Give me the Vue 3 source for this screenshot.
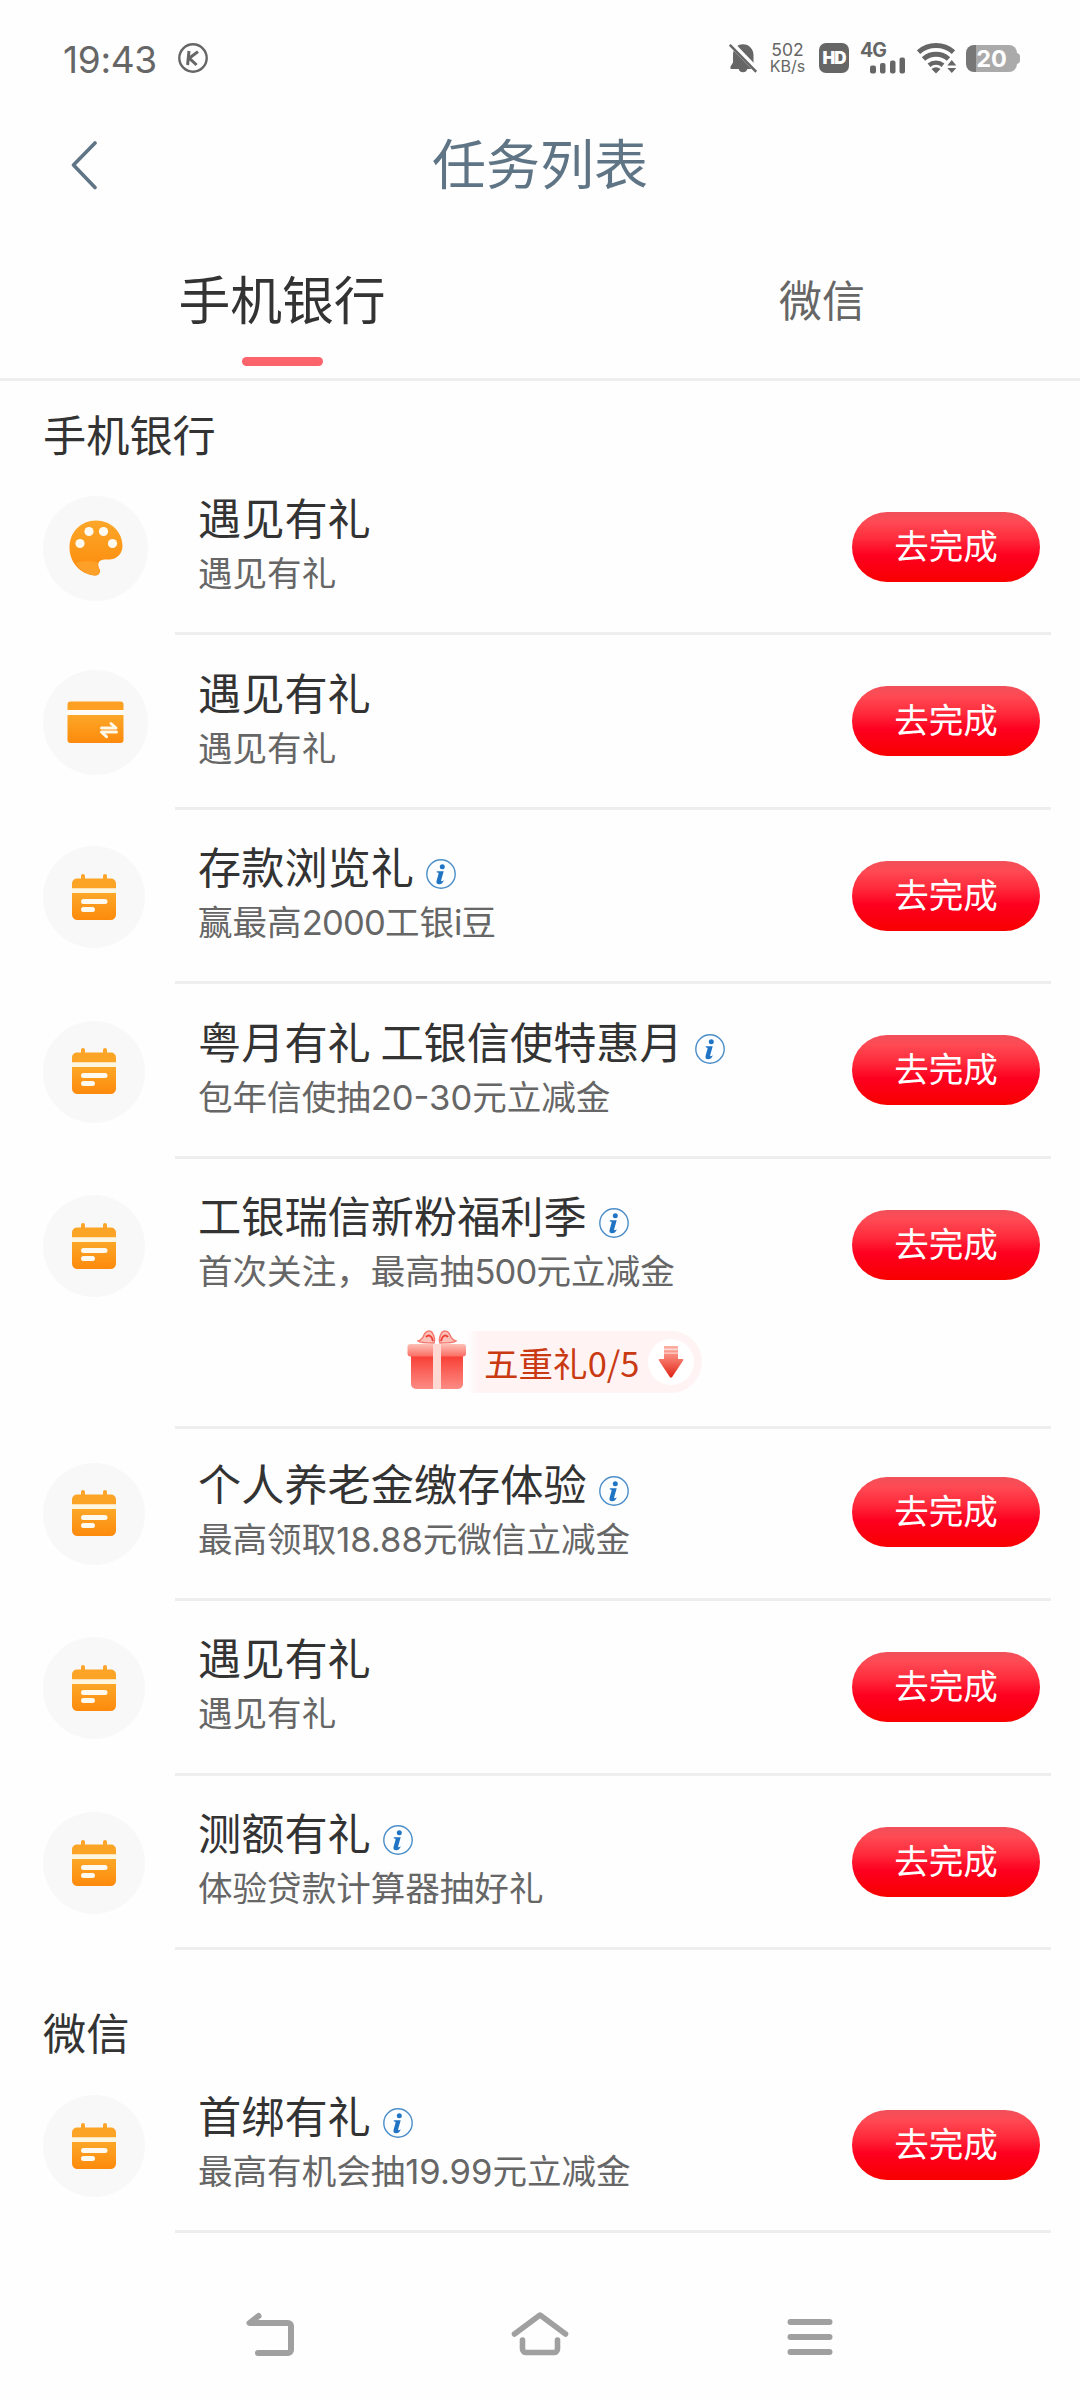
<script setup>
const sections = [
  {
    name: '手机银行',
    tasks: [
      { icon: 'palette', title: '遇见有礼', desc: ['遇见有礼'] },
      { icon: 'card', title: '遇见有礼', desc: ['遇见有礼'] },
      { icon: 'calendar', title: '存款浏览礼', info: true, desc: ['赢最高', '2000', '工银', 'i', '豆'] },
      { icon: 'calendar', title: '粤月有礼 工银信使特惠月', info: true, desc: ['包年信使抽', '20-30', '元立减金'] },
      { icon: 'calendar', title: '工银瑞信新粉福利季', info: true, gift: '五重礼0/5', desc: ['首次关注，最高抽', '500', '元立减金'] },
      { icon: 'calendar', title: '个人养老金缴存体验', info: true, desc: ['最高领取', '18.88', '元微信立减金'] },
      { icon: 'calendar', title: '遇见有礼', desc: ['遇见有礼'] },
      { icon: 'calendar', title: '测额有礼', info: true, desc: ['体验贷款计算器抽好礼'] },
    ],
  },
  {
    name: '微信',
    tasks: [
      { icon: 'calendar', title: '首绑有礼', info: true, desc: ['最高有机会抽', '19.99', '元立减金'] },
    ],
  },
]
</script>

<template>
  <div class="screen">
    <svg class="defs" width="0" height="0">
      <defs>
        <linearGradient id="orange" x1="0" y1="0" x2="0" y2="1">
          <stop offset="0" stop-color="#fca728" />
          <stop offset="1" stop-color="#fd8a0c" />
        </linearGradient>
        <linearGradient id="lid" x1="0" y1="0" x2="0" y2="1">
          <stop offset="0" stop-color="#fdc0b6" />
          <stop offset="1" stop-color="#fb6c62" />
        </linearGradient>
        <linearGradient id="box" x1="0" y1="0" x2="0" y2="1">
          <stop offset="0" stop-color="#f8382f" />
          <stop offset="1" stop-color="#fb8c84" />
        </linearGradient>
        <linearGradient id="arrow" x1="0" y1="0" x2="0" y2="1">
          <stop offset="0" stop-color="#fcb0a4" />
          <stop offset=".5" stop-color="#f46a5c" />
          <stop offset="1" stop-color="#dd2414" />
        </linearGradient>
      </defs>
    </svg>

    <header class="status">
      <span class="time">19:43</span>
      <svg class="k" width="30" height="30" viewBox="0 0 30 30" fill="none" stroke="#666">
        <circle cx="15" cy="15" r="13.7" stroke-width="2.4" />
        <path d="M11 8 9.6 22M20 8.6l-8.800 6.600L18.600 22" stroke-width="3" />
      </svg>
      <svg class="bell" width="28" height="31" viewBox="0 0 28 31">
        <path d="M14 .2c-6 0-10 4.800-10 10.800v7.500L1.500 22.500v2.500h8.200a4.500 4.500 0 0 0 8.600 0H26v-2.500L24.500 18.500V11C24.500 5 20 .2 14 .2Z" transform="translate(0 1)" fill="#666" />
        <path d="M0 -1.500 29 28.500" stroke="#fefefe" stroke-width="6" />
        <path d="M.8 1.800 27.200 28.800" stroke="#666" stroke-width="2.500" />
      </svg>
      <div class="speed"><span>502</span><span>KB/s</span></div>
      <span class="hd">HD</span>
      <div class="signal">
        <span class="gen">4G</span>
        <svg width="36" height="17" viewBox="0 0 36 17" fill="#666">
          <rect x="0" y="8.500" width="6" height="8" rx="2" />
          <rect x="10" y="6" width="5.500" height="10.500" rx="2" />
          <rect x="20" y="3.500" width="5.500" height="13" rx="2" />
          <rect x="29.500" y=".5" width="5.500" height="16" rx="2" />
        </svg>
      </div>
      <svg class="wifi" width="40" height="31" viewBox="0 0 40 31">
        <g fill="none" stroke="#666" stroke-width="5">
          <path d="M1.500 9.200a26.500 26.500 0 0 1 35 0" />
          <path d="M6.500 16a18.800 18.800 0 0 1 25 0" />
          <path d="M12 22.200a10.800 10.800 0 0 1 14 0" stroke-width="4.400" />
        </g>
        <path d="M14.500 26a7 7 0 0 1 9 0L19 30.500Z" fill="#666" />
        <path d="M29 23.500 34.800 14.500 42 23.500 34.800 33Z" fill="#fefefe" />
        <path d="M30.300 22.500 34.800 17l4.500 5.500ZM30.300 25 34.800 30l4.500-5Z" fill="#666" />
      </svg>
      <div class="battery"><span>20</span></div>
    </header>

    <div class="titlebar">
      <svg class="back" width="28" height="50" viewBox="0 0 28 50" fill="none" stroke="#5f7585" stroke-width="3.600" stroke-linecap="round" stroke-linejoin="round">
        <path d="M25 3 3.500 25 25 47.500" />
      </svg>
      <h1>任务列表</h1>
    </div>

    <nav class="tabs">
      <div class="tab active">手机银行</div>
      <div class="tab">微信</div>
    </nav>

    <section v-for="s in sections" :key="s.name">
      <h2>{{ s.name }}</h2>
      <article v-for="(t, i) in s.tasks" :key="i" class="task" :class="{ tall: t.gift }">
        <div class="row">
          <div class="badge" :class="{ small: t.icon === 'calendar' }">
            <svg v-if="t.icon === 'palette'" width="54" height="56" viewBox="0 0 54 56">
              <path d="M27 .5C12 .5.500 12 .5 27.500.5 43 12 54.500 26 55.500c4 .3 6-3.500 4.500-6.500-2-4-2-9 4.500-9.500h6C48.500 39 53.500 33 53.500 26 53.500 12 42 .5 27 .5Z" fill="url(#orange)" />
              <path d="M7 43c6-2.500 16-2 22-.5-1 3 .2 5 1.300 7 1.200 3-.8 6.300-4.300 6C18 55 11 50 7 43Z" fill="#fda02a" />
              <g fill="#fffaf0"><circle cx="11" cy="23.500" r="4.600" /><circle cx="20" cy="11.500" r="4.600" /><circle cx="34.500" cy="11.500" r="4.600" /><circle cx="43.500" cy="23.500" r="4.600" /></g>
            </svg>
            <svg v-else-if="t.icon === 'card'" width="57" height="43" viewBox="0 0 57 43">
              <path d="M3.500.5h50a3 3 0 0 1 3 3V9H.5V3.500a3 3 0 0 1 3-3Z" fill="#fda023" />
              <rect y="9" x=".5" width="56" height="5" fill="#fffdf5" />
              <path d="M.5 14h56v25a3 3 0 0 1-3 3h-50a3 3 0 0 1-3-3Z" fill="url(#orange)" />
              <path d="M34.500 27h14.500L44 22.500M49.500 31H34.500l5 4.700" fill="none" stroke="#fff8e8" stroke-width="3" stroke-linecap="round" stroke-linejoin="round" />
            </svg>
            <svg v-else width="46" height="47" viewBox="0 0 46 47">
              <path d="M12 2v6M34 2v6" stroke="#fca52a" stroke-width="4" stroke-linecap="round" />
              <path d="M6 4.500h34a5 5 0 0 1 5 5v5H1v-5a5 5 0 0 1 5-5Z" fill="#fca426" />
              <rect x="1" y="14.500" width="44" height="4.500" fill="#fff6df" />
              <path d="M1 19h44v21.500a5.500 5.500 0 0 1-5.500 5.500h-33A5.500 5.500 0 0 1 1 40.500Z" fill="url(#orange)" />
              <path d="M12.500 27.500h21.500M12.500 35.500h9" stroke="#fffaf0" stroke-width="5" stroke-linecap="round" />
            </svg>
          </div>
          <div class="text">
            <div class="name">
              <span>{{ t.title }}</span>
              <svg v-if="t.info" class="info" width="30" height="30" viewBox="0 0 30 30">
                <circle cx="15" cy="15" r="14.200" fill="#fcfeff" stroke="#4b8dc8" stroke-width="1.400" />
                <circle cx="16.300" cy="7.800" r="2.500" fill="#1f74c4" />
                <path d="M10.800 12.300h6.900l-2.600 9.200c-.3 1.200.8 1.200 2.800-.6-.8 2.800-2.500 4.300-4.800 4.300-2.400 0-3-1.500-2.500-3.400l1.900-6.700c.3-1.200-.2-1.500-1.700-1.500Z" fill="#1f74c4" />
              </svg>
            </div>
            <div class="desc"><span v-for="(d, j) in t.desc" :key="j" :class="{ num: j % 2 === 1, wide: /[.-]/.test(d) }">{{ d }}</span></div>
          </div>
          <button>去完成</button>
        </div>
        <div v-if="t.gift" class="gift">
          <svg width="60" height="62" viewBox="0 0 60 62">
            <path d="M27 14C20 14 13 14 11 12c3-1 5-3 6-6 2-5 7-5 9-1 1.500 3 2 6 1 9Z" fill="#fcc2b9" stroke="#f67a70" stroke-width="1.500" />
            <path d="M33 14c7 0 14 0 16-2-3-1-5-3-6-6-2-5-7-5-9-1-1.500 3-2 6-1 9Z" fill="#fcc2b9" stroke="#f67a70" stroke-width="1.500" />
            <path d="M26 12c-1-5-4-7-7-4M34 12c1-5 4-7 7-4" fill="none" stroke="#ee4038" stroke-width="2" />
            <path d="M4 24h52v31a5 5 0 0 1-5 5H9a5 5 0 0 1-5-5Z" fill="url(#box)" />
            <rect x=".5" y="15" width="58.500" height="12.500" rx="3" fill="url(#lid)" />
            <path d="M26 15h8v45h-8Z" fill="#fed8d2" />
          </svg>
          <div class="pill">
            <span>{{ t.gift }}</span>
            <i>
              <svg width="26" height="33" viewBox="0 0 26 33" fill="url(#arrow)">
                <path d="M6 0h14v13h4.500q1.500 0 .6 1.500L14.200 31q-1.200 1.600-2.400 0L.9 14.500Q0 13 1.500 13H6Z" />
                <path d="M6 2.500h14v1.800H6ZM6 6.500h14v1.300H6Z" fill="#fff" opacity=".6" />
              </svg>
            </i>
          </div>
        </div>
      </article>
    </section>

    <footer class="sysnav">
      <div>
        <svg width="50" height="44" viewBox="0 0 50 44" fill="none" stroke="#a0a0a0" stroke-width="6" stroke-linecap="round" stroke-linejoin="round">
          <path d="M13.500 4 4.500 11H43a3 3 0 0 1 3 3V38a3 3 0 0 1-3 3H13" />
        </svg>
      </div>
      <div>
        <svg width="60" height="45" viewBox="0 0 60 45" fill="none" stroke="#a0a0a0" stroke-width="5.600" stroke-linecap="round" stroke-linejoin="round">
          <path d="M4.500 23 30 4 55.500 23M12.500 29v9a3.500 3.500 0 0 0 3.500 3.500h28a3.500 3.500 0 0 0 3.500-3.500v-9" />
        </svg>
      </div>
      <div>
        <svg width="46" height="36" viewBox="0 0 46 36" stroke="#a0a0a0" stroke-width="6" stroke-linecap="round">
          <path d="M3.500 3h39M3.500 18h39M3.500 33h39" />
        </svg>
      </div>
    </footer>
  </div>
</template>

<style>
body { background: #fefefe; }
</style>

<style scoped>
* { box-sizing: border-box; }
.screen {
  width: 1080px;
  height: 2400px;
  display: flex;
  flex-direction: column;
  overflow: hidden;
  background: #fefefe;
  color: #333;
  font-family: "Noto Sans CJK SC", sans-serif;
}
.defs { position: absolute; }
svg { display: block; flex: none; }
h1, h2 { margin: 0; font-weight: 400; }

.status {
  height: 116px;
  display: flex;
  align-items: center;
  padding-left: 63px;
  color: #666;
  font-family: Inter, sans-serif;
}
.time { width: 115px; font-size: 37px; letter-spacing: -0.3px; line-height: 40px; padding-top: 4px; }
.bell { margin-left: 521px; }
.speed {
  width: 37px;
  margin-left: 12px;
  display: flex;
  flex-direction: column;
  align-items: center;
  font-size: 17.5px;
  line-height: 17px;
}
.speed span:last-child { font-size: 16px; }
.hd {
  width: 30px;
  height: 30px;
  margin-left: 13px;
  border-radius: 7px;
  background: #666;
  color: #fff;
  font-size: 17px;
  font-weight: 900;
  line-height: 30px;
  text-align: center;
  letter-spacing: -1px;
}
.signal { width: 46px; height: 31px; margin-left: 11px; display: flex; flex-direction: column; align-items: flex-end; }
.gen { align-self: flex-start; font-size: 19.5px; font-weight: 700; line-height: 14px; letter-spacing: -0.9px; }
.wifi { margin-left: 11px; }
.battery {
  position: relative;
  width: 51px;
  height: 27px;
  margin-left: 9px;
  border-radius: 8px;
  background: linear-gradient(90deg, #777 10px, #aaa 10px);
  color: #fff;
  font-size: 23.5px;
  font-weight: 700;
  line-height: 28px;
  text-align: center;
}
.battery::after {
  content: "";
  position: absolute;
  right: -3px;
  top: 8px;
  width: 4px;
  height: 11px;
  border-radius: 0 4px 4px 0;
  background: #aaa;
}

.titlebar { height: 98px; display: flex; align-items: center; padding: 0 71px 0 70px; color: #5f7585; }
h1 { flex: 1; margin-right: 27px; text-align: center; font-size: 54px; line-height: 80px; padding-bottom: 6px; }

.tabs { height: 167px; display: grid; grid-template-columns: 1fr 1fr; border-bottom: 3px solid #eee; }
.tab {
  padding: 54px 0 0 24px;
  display: flex;
  flex-direction: column;
  align-items: center;
  color: #666;
  font-size: 43px;
  line-height: 60px;
}
.tab.active { color: #333; font-size: 51.8px; }
.tab.active::after { content: ""; width: 81px; height: 9px; margin-top: 29px; border-radius: 5px; background: #fc646c; }

h2 { height: 79.500px; padding: 22px 0 0 43px; font-size: 43.2px; line-height: 60px; }
section + section h2 { margin-top: 29px; }

.task { position: relative; height: 174.6px; }
.task::after { content: ""; display: block; height: 3px; margin: 0 29px 0 175px; background: #eee; }
.task.tall { height: 267.500px; }
.row { height: 171.6px; display: flex; align-items: flex-start; padding: 0 40px 0 43px; }
.badge {
  width: 105px;
  height: 105px;
  margin-top: 35px;
  border-radius: 50%;
  background: #f8f8f8;
  display: flex;
  align-items: center;
  justify-content: center;
}
.badge.small { width: 102px; height: 102px; margin: 36.5px 3px 0 0; }
.text { flex: 1; padding: 29.500px 0 0 50px; white-space: nowrap; }
.name { display: flex; align-items: center; font-size: 43.2px; line-height: 52px; }
.info { margin: 20px 0 0 12px; align-self: flex-start; }
.desc { margin-top: 5px; color: #666; font-size: 34.56px; line-height: 48px; height: 48px; }
.num { font-family: Inter, sans-serif; letter-spacing: -0.8px; line-height: 0; }
.num.wide { letter-spacing: 0; }
button {
  width: 188px;
  height: 70px;
  margin: 51px 0 0;
  padding: 0 0 6px;
  border: 0;
  border-radius: 35px;
  background: linear-gradient(180deg, #f0505a 0, #ff4a54 14%, #ff2c3c 38%, #fd0020 62%, #f80000 100%);
  color: #fff;
  font: 34.56px/62px "Noto Sans CJK SC", sans-serif;
}

.gift { height: 95.500px; padding: 1px 0 0 407px; display: flex; align-items: flex-start; }
.gift > svg { margin-top: -2px; }
.pill {
  width: 235px;
  height: 62px;
  display: flex;
  align-items: center;
  justify-content: space-between;
  padding: 0 8px 0 17px;
  border-radius: 0 31px 31px 0;
  background: linear-gradient(90deg, #fefefe 0, #fff4f3 12px, #fff4f3 100%);
  color: #c93a12;
  font-size: 34.56px;
  line-height: 61px;
}
.pill i { width: 46px; height: 46px; border-radius: 50%; background: #fff; display: flex; align-items: center; justify-content: center; }

.sysnav { height: 127px; margin-top: auto; padding: 0 135px; display: grid; grid-template-columns: repeat(3, 1fr); align-items: center; justify-items: center; }
.sysnav div { height: 44px; display: flex; align-items: center; }
.sysnav div:nth-child(-n+2) { margin-top: -6px; }
</style>
